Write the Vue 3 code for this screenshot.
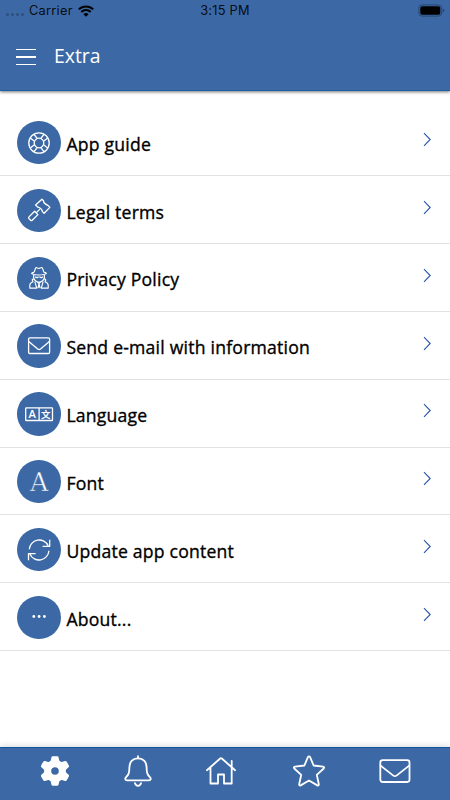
<script setup>
const items = [
  { icon: 'guide', label: 'App guide' },
  { icon: 'legal', label: 'Legal terms' },
  { icon: 'privacy', label: 'Privacy Policy' },
  { icon: 'mail', label: 'Send e-mail with information' },
  { icon: 'language', label: 'Language' },
  { icon: 'font', label: 'Font' },
  { icon: 'update', label: 'Update app content' },
  { icon: 'about', label: 'About...' }
]

// spokes of the lifebuoy, one pair per quarter
const quarters = [0, 90, 180, 270]
const teeth = [0, 60, 120, 180, 240, 300]
</script>

<template>
  <div class="app">
    <header class="header">
      <div class="status">
        <div class="status-left">
          <span class="signal"><i></i><i></i><i></i><i></i></span>
          <span class="carrier">Carrier</span>
          <svg class="wifi" width="16" height="12" viewBox="0 0 16 12">
            <path d="M0.8 4.4a10.3 10.3 0 0 1 14.4 0" />
            <path d="M3.3 7a6.7 6.7 0 0 1 9.4 0" />
            <path class="solid" d="M8 11.7L5.4 9.2a3.7 3.7 0 0 1 5.2 0z" />
          </svg>
        </div>
        <span class="time">3:15 PM</span>
        <svg class="battery" width="27" height="13" viewBox="0 0 27 13">
          <rect class="shell" x="0.9" y="0.9" width="22.8" height="11.2" rx="3.2" />
          <rect x="2.3" y="2.3" width="20" height="8.4" rx="1.8" />
          <path class="cap" d="M24.8 4.4a2.2 2.2 0 0 1 0 4.2z" />
        </svg>
      </div>
      <div class="toolbar">
        <button class="menu"><span></span><span></span><span></span></button>
        <h1>Extra</h1>
      </div>
    </header>

    <main class="list">
      <div v-for="item in items" :key="item.icon" class="item">
        <div class="circle">
          <svg width="44" height="44" viewBox="0 0 44 44">
            <g v-if="item.icon === 'guide'">
              <circle cx="22" cy="22" r="10.2" />
              <circle cx="22" cy="22" r="4.8" />
              <path v-for="q in quarters" :key="q" :transform="`rotate(${q} 22 22)`"
                d="M23.8 17.5l3.3-4.3M26.5 20.2l4.3-3.3" />
            </g>
            <g v-else-if="item.icon === 'legal'">
              <path d="M24.9 11.2L26.5 12.8Q26.2 15.4 31.2 17.6L32.9 19.4L27.1 25.3L25.4 23.6Q25.2 20.5 20.4 18.8L18.6 17z" />
              <path d="M22.9 21.1L19.6 24.4M17.6 23.3L20.9 26.6L15.2 32.2Q14.4 33 13.6 32.2L11.9 30.5Q11.2 29.7 12 28.9z" />
            </g>
            <g v-else-if="item.icon === 'privacy'" class="thin">
              <path d="M17.2 16.1L18.5 12.2Q19.2 11.2 20.4 12L22 12.5L23.8 11.8Q25 11.2 25.6 12.4L26.8 16.1M17.2 16.1Q14.8 16.7 14.6 17.4Q17 19 22 19Q27.4 19 29.5 17.4Q29.2 16.7 26.8 16.1" />
              <path d="M16.6 19V21.6Q17.5 25.5 22 26.3Q26.5 25.5 27.4 21.6V19M18 20.6Q20 22.6 21.6 20.6M22.4 20.6Q24.2 22.6 26 20.6" />
              <path d="M16.6 22.5L15.2 24L16 25.8Q12.8 27 12.8 29.3V32.1H19.8L17.8 25.7M27.4 22.5L28.8 24L28 25.8Q31.2 27 31.2 29.3V32.1H24.2L26.2 25.7M20.5 26L22 27.7L23.5 26M22 27.7L21 32.2M22 27.7L23 32.2" />
            </g>
            <g v-else-if="item.icon === 'mail'">
              <rect x="11.6" y="13.8" width="21" height="15.7" rx="1.3" />
              <path d="M11.8 17.5L20.7 25Q22.1 26 23.5 25L32.4 17.5" />
            </g>
            <g v-else-if="item.icon === 'language'">
              <rect x="8.7" y="15.9" width="26.8" height="12.6" rx="0.6" />
              <path d="M22.1 15.9v12.6" />
              <text class="glyph latin" x="15.3" y="26.1">A</text>
              <text class="glyph cjk" x="28.8" y="25.6">文</text>
            </g>
            <text v-else-if="item.icon === 'font'" class="glyph serif" x="22" y="31.4">A</text>
            <g v-else-if="item.icon === 'update'">
              <path d="M12.3 21.3A9.9 9.9 0 0 1 31.2 17.8M32.7 11.8V18.4H25.6" />
              <path d="M31.9 22.7A9.9 9.9 0 0 1 13 26.2M11.5 32.3V25.6H18.6" />
            </g>
            <g v-else class="dots">
              <circle cx="16.8" cy="21.5" r="1.4" />
              <circle cx="22.1" cy="21.5" r="1.4" />
              <circle cx="27.4" cy="21.5" r="1.4" />
            </g>
          </svg>
        </div>
        <span class="label">{{ item.label }}</span>
        <svg class="chevron" width="9" height="15" viewBox="0 0 9 15">
          <path d="M1 1.2L7.2 7.5L1 13.8" />
        </svg>
      </div>
    </main>

    <nav class="tabs">
      <svg width="30" height="32" viewBox="0 0 30 32">
        <defs>
          <mask id="gear-hole">
            <rect width="30" height="32" fill="#fff" />
            <circle cx="15" cy="16" r="4.7" fill="#000" />
          </mask>
        </defs>
        <g class="gear" mask="url(#gear-hole)">
          <circle cx="15" cy="16" r="10.9" />
          <path v-for="t in teeth" :key="t" :transform="`rotate(${t} 15 16)`"
            d="M10.2 8L11.4 2.4Q11.6 1.4 12.6 1.3Q15 1 17.4 1.3Q18.4 1.4 18.6 2.4L19.8 8z" />
        </g>
      </svg>
      <svg width="28" height="32" viewBox="0 0 28 32">
        <path d="M14 1.2V3.3M14 3.3C8.5 3.3 5.4 7.3 5.4 12.2C5.4 18.5 4.5 19.8 1.9 22.3C0.8 23.5 1.2 25.3 2.9 25.3H25.1C26.8 25.3 27.2 23.5 26.1 22.3C23.5 19.8 22.6 18.5 22.6 12.2C22.6 7.3 19.5 3.3 14 3.3z" />
        <path d="M10.9 28.1Q11.7 30.8 14 30.8Q16.3 30.8 17.1 28.1" />
      </svg>
      <svg width="30" height="32" viewBox="0 0 30 32">
        <path d="M0.9 15.2L14.2 3.5Q15 2.9 15.8 3.5L29.1 15.2M4.5 12.5V28.5H12V19.5H18V28.5H25.7V5.8" />
      </svg>
      <svg width="32" height="32" viewBox="0 0 32 32">
        <path d="M14.9 2.1Q16 0.5 17.1 2.1L20.6 10.5L30 11.6Q31.8 12.1 30.7 13.5L23.8 19.8L25.8 29.2Q25.9 31 24.3 30.4L16 25.5L7.7 30.4Q6.1 31 6.2 29.2L8.2 19.8L1.3 13.5Q0.2 12.1 2 11.6L11.4 10.5z" />
      </svg>
      <svg width="32" height="32" viewBox="0 0 32 32">
        <rect x="1.3" y="5.2" width="29.2" height="21.8" rx="2.4" />
        <path d="M1.6 10.6L14 20.4Q15.9 21.9 17.8 20.4L30.2 10.6" />
      </svg>
    </nav>
  </div>
</template>

<style>
body {
  margin: 0;
  background: #fff;
}
</style>

<style scoped>
.app {
  width: 450px;
  height: 800px;
  display: flex;
  flex-direction: column;
  overflow: hidden;
  font-family: "Open Sans", "Noto Sans", sans-serif;
}

.header {
  height: 91px;
  flex: none;
  box-sizing: border-box;
  background: #3c69a6;
  border-bottom: 1px solid #1f5fa3;
  box-shadow: 0 1px 3px rgba(0, 0, 0, 0.55);
}

.status {
  height: 21px;
  display: grid;
  grid-template-columns: 1fr auto 1fr;
  align-items: center;
  font-family: Inter, sans-serif;
  font-size: 12.8px;
  letter-spacing: 0.25px;
  color: #080c12;
}

.status-left {
  display: flex;
  align-items: center;
  padding-left: 6px;
}

.signal {
  display: flex;
  gap: 2px;
  padding-top: 7px;
  margin-right: 5px;
}

.signal i {
  width: 3px;
  height: 3px;
  border-radius: 50%;
  background: #2e507f;
}

.wifi {
  margin-left: 5px;
  fill: none;
  stroke: #000;
  stroke-width: 2;
}

.wifi .solid {
  fill: #000;
  stroke: none;
}

.battery {
  justify-self: end;
  margin-right: 5px;
}

.battery .shell {
  fill: none;
  stroke: #28466f;
  stroke-width: 1;
}

.battery .cap {
  fill: #28466f;
}

.toolbar {
  display: flex;
  align-items: center;
  height: 70px;
  padding-left: 16px;
}

.menu {
  display: flex;
  flex-direction: column;
  gap: 6px;
  width: 20px;
  padding: 2px 0 0;
  border: 0;
  background: none;
}

.menu span {
  width: 20px;
  height: 1.4px;
  background: #fff;
}

h1 {
  margin: 0 0 0 18px;
  font-size: 19.4px;
  font-weight: 400;
  line-height: 28px;
  color: #fff;
}

.list {
  flex: 1;
  padding-top: 17.5px;
}

.item {
  display: flex;
  align-items: center;
  height: 67.83px;
  box-sizing: border-box;
  padding: 1.4px 18px 0 17.4px;
  border-bottom: 1px solid #e2e2e2;
}

.circle {
  display: flex;
  align-items: center;
  justify-content: center;
  flex: none;
  width: 43.4px;
  height: 43.4px;
  border-radius: 50%;
  background: #3c69a6;
}

.circle svg {
  flex: none;
  fill: none;
  stroke: #fff;
  stroke-width: 1.3;
  stroke-linejoin: round;
}

.circle .thin {
  stroke-width: 1.15;
}

.circle .dots {
  fill: #fff;
  stroke: none;
}

.circle .glyph {
  fill: #fff;
  stroke: none;
  text-anchor: middle;
}

.latin {
  font: 600 11.2px "Open Sans", sans-serif;
}

.cjk {
  font: 700 9.5px "Noto Sans CJK SC", sans-serif;
}

/* the outline in the circle colour thins the letter */
.circle .serif {
  font: 400 25.2px "DejaVu Serif", serif;
  stroke: #3c69a6;
  stroke-width: 0.5;
}

/* between regular and semibold */
.label {
  flex: 1;
  margin-left: 5.6px;
  padding-top: 2.2px;
  font-size: 17.6px;
  font-weight: 400;
  line-height: 24px;
  letter-spacing: 0.22px;
  color: #000;
  -webkit-text-stroke: 0.35px #000;
}

.chevron {
  margin-bottom: 6px;
  fill: none;
  stroke: #2a56a8;
  stroke-width: 1.1;
}

.tabs {
  display: flex;
  align-items: center;
  flex: none;
  height: 53.5px;
  box-sizing: border-box;
  padding: 0 0 5px 40px;
  background: #3c69a6;
  border-top: 1px solid #0e55a2;
  box-shadow: 0 -1px 6px rgba(0, 0, 0, 0.15);
}

.tabs svg {
  flex: none;
  fill: none;
  stroke: #fff;
  stroke-width: 1.8;
  stroke-linejoin: round;
  stroke-linecap: round;
}

.tabs svg + svg {
  margin-left: 53.6px;
}

.tabs svg:nth-child(3) {
  margin-left: 54.4px;
}

.tabs svg:nth-child(4) {
  margin-left: 57px;
}

.tabs .gear {
  fill: #fff;
  stroke: none;
}
</style>
